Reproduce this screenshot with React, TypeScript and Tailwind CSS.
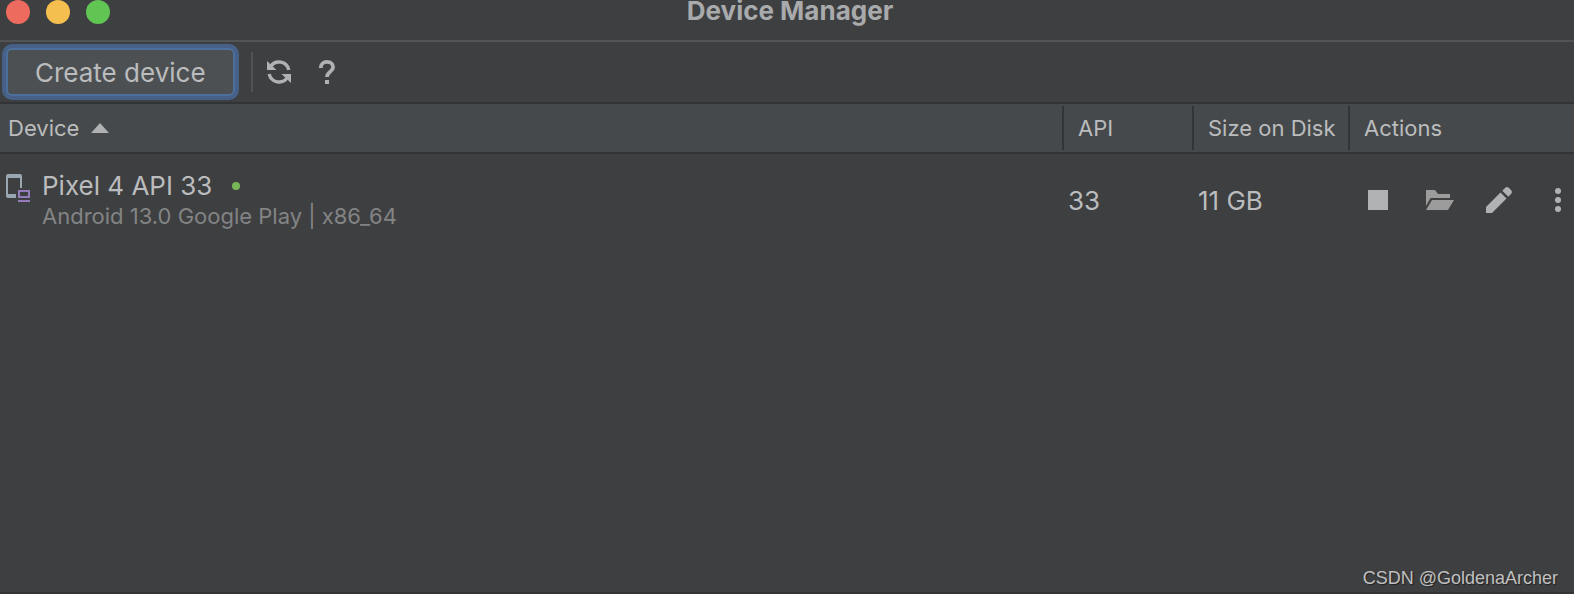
import React from 'react';

const devices = [
  {
    name: 'Pixel 4 API 33',
    details: 'Android 13.0 Google Play | x86_64',
    api: '33',
    size: '11 GB',
    online: true,
  },
];

const RefreshIcon = () => (
  <svg width="24" height="24" viewBox="0 0 24 24" fill="none" aria-hidden="true">
    <path d="M3.6 6.6A10 10 0 0 1 21.8 10" stroke="#afb1b3" strokeWidth="3.4" />
    <path d="M20.4 17.4A10 10 0 0 1 2.2 14" stroke="#afb1b3" strokeWidth="3.4" />
    <path d="M0 1V10H9.5Z" fill="#afb1b3" />
    <path d="M24 23V14H14.5Z" fill="#afb1b3" />
  </svg>
);

const HelpIcon = () => (
  <svg width="16" height="24" viewBox="0 0 16 24" fill="none" aria-hidden="true">
    <path
      d="M1.8 8C1.8 4.2 4.4 1.9 8 1.9C11.7 1.9 14.1 4 14.1 7.2C14.1 11.6 8 11.8 8 17"
      stroke="#afb1b3"
      strokeWidth="3.8"
    />
    <path d="M6 20H10V24H6Z" fill="#afb1b3" />
  </svg>
);

const DeviceIcon = () => (
  <svg width="24" height="28" viewBox="0 0 24 28" className="shrink-0" aria-hidden="true">
    <path
      fillRule="evenodd"
      d="M2 0H14Q16 0 16 2V14H14V4H2V20H10V24H2Q0 24 0 22V2Q0 0 2 0Z"
      fill="#9aa7b0"
    />
    <path fillRule="evenodd" d="M12 16H24V24H12ZM14 18V22H22V18Z" fill="#957dbd" />
    <path d="M12 26H24V28H12Z" fill="#957dbd" />
  </svg>
);

const StopIcon = () => (
  <svg width="20" height="20" viewBox="0 0 20 20" aria-hidden="true">
    <path d="M0 0H20V20H0Z" fill="#afb1b3" />
  </svg>
);

const FolderIcon = () => (
  <svg width="28" height="20" viewBox="0 0 28 20" aria-hidden="true">
    <path d="M0 0H9L12 4H24V8H4.5L0 16Z" fill="#9c9c9c" />
    <path d="M6 10H28L22 20H0Z" fill="#9c9c9c" />
  </svg>
);

const PencilIcon = () => (
  <svg width="26" height="26" viewBox="0 0 26 26" aria-hidden="true">
    <path d="M14.5 5.5L20.5 11.5L6 26H0V20Z" fill="#afb1b3" />
    <path d="M16.3 3.7L19 1Q21 -0.8 23 1L25 3Q26.8 5 25 7L22.3 9.7Z" fill="#afb1b3" />
  </svg>
);

const MoreIcon = () => (
  <svg width="6" height="24" viewBox="0 0 6 24" fill="#afb1b3" aria-hidden="true">
    <circle cx="3" cy="3" r="3" />
    <circle cx="3" cy="12" r="3" />
    <circle cx="3" cy="21" r="3" />
  </svg>
);

const TitleBar = () => (
  <header className="grid grid-cols-[1fr_auto_1fr] items-start h-[42px] pl-[6px] border-b-2 border-[#515354]">
    <div className="flex gap-4">
      <button aria-label="Close" className="size-6 rounded-full bg-[#ed6a5e]" />
      <button aria-label="Minimize" className="size-6 rounded-full bg-[#f5bf4f]" />
      <button aria-label="Zoom" className="size-6 rounded-full bg-[#61c554]" />
    </div>
    <h1 className="text-[26px] leading-[22px] font-bold text-[#a9aaab]">Device Manager</h1>
  </header>
);

const Toolbar = () => (
  <div className="flex items-center h-[62px] pl-[6px] border-b-2 border-[#323334]">
    <button className="h-12 pt-[2px] px-[27px] rounded-md border-2 border-[#4d6f9b] bg-[#4c5052] ring-4 ring-[#466088] text-[26px] leading-8">
      Create device
    </button>
    <div className="w-[2px] h-10 ml-4 bg-[#515355]" />
    <button aria-label="Refresh" className="ml-[14px]">
      <RefreshIcon />
    </button>
    <button aria-label="Help" className="ml-7">
      <HelpIcon />
    </button>
  </div>
);

const DeviceTable = () => (
  <table className="w-full table-fixed border-collapse text-left">
    <colgroup>
      <col />
      <col className="w-[130px]" />
      <col className="w-[156px]" />
      <col className="w-[226px]" />
    </colgroup>
    <thead className="bg-[#45494b] text-[22px] leading-7">
      <tr className="h-[50px] shadow-[inset_0_-2px_0_#323537]">
        <th className="p-0 pb-[2px] font-normal">
          <button className="flex items-center gap-3 pl-2">
            Device
            <svg width="18" height="10" viewBox="0 0 18 10" aria-hidden="true">
              <path d="M0 10L9 0L18 10Z" fill="#afb1b3" />
            </svg>
          </button>
        </th>
        {['API', 'Size on Disk', 'Actions'].map((label) => (
          <th key={label} className="p-0 pb-[2px] font-normal whitespace-nowrap">
            <div className="flex items-center h-11 pl-[14px] border-l-2 border-[#323537]">{label}</div>
          </th>
        ))}
      </tr>
    </thead>
    <tbody>
      {devices.map((device) => (
        <tr key={device.name} className="text-[26px] leading-8">
          <td className="p-0">
            <div className="flex items-center gap-3 py-4 pl-[6px]">
              <div className="flex h-[60px] pt-1">
                <DeviceIcon />
              </div>
              <div>
                <div className="flex items-center gap-5">
                  {device.name}
                  {device.online && <span className="size-2 rounded-full bg-[#77b757]" />}
                </div>
                <div className="text-[22px] leading-7 text-[#838485]">{device.details}</div>
              </div>
            </div>
          </td>
          <td className="p-0 pt-[2px] pl-[6px]">{device.api}</td>
          <td className="p-0 pt-[2px] pl-[6px]">{device.size}</td>
          <td className="p-0 pl-5">
            <div className="flex items-center">
              <button aria-label="Stop">
                <StopIcon />
              </button>
              <button aria-label="Show on disk" className="ml-[38px]">
                <FolderIcon />
              </button>
              <button aria-label="Edit" className="ml-8">
                <PencilIcon />
              </button>
              <button aria-label="More actions" className="ml-[43px]">
                <MoreIcon />
              </button>
            </div>
          </td>
        </tr>
      ))}
    </tbody>
  </table>
);

const App = () => {
  return (
    <div className="flex flex-col min-h-screen bg-[#3e3f41] text-[#bbbcbd] font-['Inter',sans-serif] border-b-2 border-[#343436]">
      <TitleBar />
      <Toolbar />
      <main className="flex-1">
        <DeviceTable />
      </main>
      <footer className="pr-4 pb-[2px] text-right text-[18px] leading-6 text-[#c0c0c0] font-['Liberation_Sans',sans-serif] [text-shadow:1px_1px_1px_#222]">
        CSDN @GoldenaArcher
      </footer>
    </div>
  );
};

export default App;
